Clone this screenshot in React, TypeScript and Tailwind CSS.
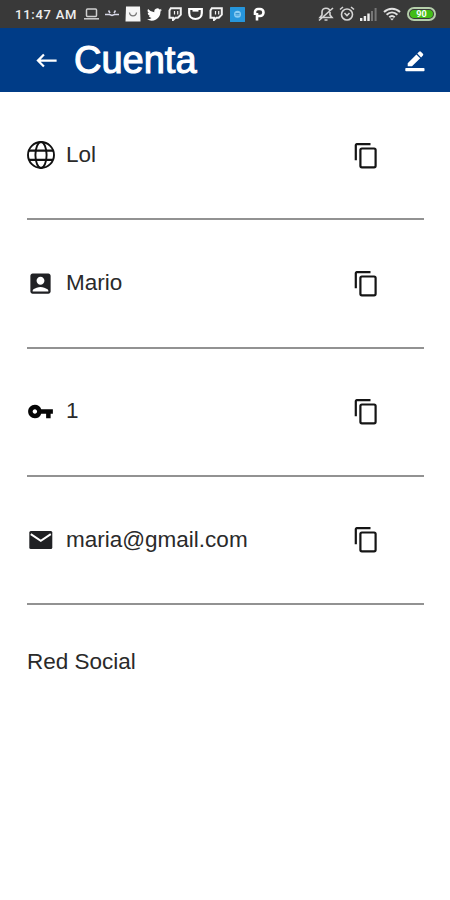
import React from 'react';
import { MdAccountBox, MdKeyboardBackspace, MdVpnKey } from 'react-icons/md';

function GlobeIcon() {
    return (
        <svg viewBox="0 0 28 28" className="w-7 h-7 shrink-0" fill="none" stroke="#111" strokeWidth="1.9">
            <circle cx="14" cy="14" r="13" />
            <ellipse cx="14" cy="14" rx="5.6" ry="13" />
            <path d="M2 9.700h24M2 18.900h24" strokeWidth="2.200" />
        </svg>
    );
}

function CopyIcon() {
    return (
        <svg viewBox="0 0 24 27" className="w-6 h-[27px]" fill="none" stroke="#151515" strokeWidth="2.200" strokeLinejoin="round">
            <path d="M1.800 18.300V3.200a1 1 0 0 1 1-1H16.500" />
            <rect x="6.400" y="6.500" width="15.200" height="18.800" rx="1.500" />
        </svg>
    );
}

function MailIcon() {
    return (
        <svg viewBox="0 0 24 18" className="w-6 h-[18px]">
            <rect x="0.300" width="23" height="18" rx="1.500" fill="#202124" />
            <path d="M1.800 3.200l10 6.600 10-6.600" fill="none" stroke="#fff" strokeWidth="2" />
        </svg>
    );
}

function EditIcon() {
    return (
        <svg viewBox="0 0 20 22" className="w-5 h-[22px]" fill="#fff">
            <path d="M2.700 13.200L11.400 4.500l3.800 3.800L7 16.300H2.700zM12.300 3.600l1.800-1.800a1.300 1.300 0 0 1 1.800 0l2 2a1.300 1.300 0 0 1 0 1.800l-1.800 1.800z" />
            <rect x="0.300" y="18" width="19.200" height="3.300" rx="0.800" />
        </svg>
    );
}

function TwitchIcon() {
    return (
        <svg viewBox="0 0 14 14" className="w-3.5 h-3.5" fill="none" stroke="#f2f2f2" strokeWidth="2">
            <path d="M2.800 1.200h10v6.500l-3 3H7.500L5 13v-2.300H1.500V3.500z" />
            <path d="M6.500 4v3.500M9.700 4v3.500" strokeWidth="1.200" />
        </svg>
    );
}

function StatusBar() {
    return (
        <div className="h-7 bg-[#393939] text-[#eeeeee] flex items-center">
            <span className="ml-[15px] w-[63px] font-[Roboto] font-medium text-[13px] tracking-[0.750px] leading-none whitespace-nowrap">11:47 AM</span>
            <div className="ml-[6px] flex items-center gap-1.5">
                <svg viewBox="0 0 15 12" className="w-[15px] h-3" fill="none" stroke="#d0d0d0" strokeWidth="1.500">
                    <rect x="2.500" y="1" width="10" height="7.500" rx="1" />
                    <path d="M0 10.800h15" />
                </svg>
                <svg viewBox="0 0 14 12" className="w-3.5 h-3" fill="none" stroke="#d8d8e8" strokeWidth="1.500">
                    <path d="M3.500 2.500L5 5M10.500 2.500L9 5M0 6.500h4.500l2.500 1 2.500-1H14" />
                </svg>
                <svg viewBox="0 0 16 16" className="w-4 h-4">
                    <path d="M1 0.500h14l.5 15H.5z" fill="#f6f6f6" />
                    <path d="M4.500 6.500c.5 4.500 6.500 4.500 7 0" fill="none" stroke="#777" strokeWidth="1.300" />
                </svg>
                <svg viewBox="0 0 24 24" className="w-[15px] h-[15px]" fill="#fff">
                    <path d="M24 4.600a10 10 0 0 1-2.800.8 5 5 0 0 0 2.100-2.700 10 10 0 0 1-3.100 1.200 4.900 4.900 0 0 0-8.400 4.500A14 14 0 0 1 1.700 3.200a4.900 4.900 0 0 0 1.500 6.500 5 5 0 0 1-2.200-.6 4.900 4.900 0 0 0 3.900 4.900 5 5 0 0 1-2.200.1 4.900 4.900 0 0 0 4.600 3.400A10 10 0 0 1 0 19.500 14 14 0 0 0 21.500 7.100 10 10 0 0 0 24 4.600z" />
                </svg>
                <TwitchIcon />
                <svg viewBox="0 0 15 14" className="w-[15px] h-3.5" fill="none" stroke="#fff" strokeWidth="2.200">
                    <path d="M1.200 2h12.600v4c0 3.500-2.500 6-6.300 6S1.200 9.500 1.200 6z" />
                    <path d="M4.500 3.500h6" />
                </svg>
                <TwitchIcon />
                <svg viewBox="0 0 15 15" className="w-[15px] h-[15px] ml-px">
                    <rect width="15" height="15" rx="0.500" fill="#2696dc" />
                    <circle cx="7.500" cy="7.200" r="3.500" fill="#8acdf3" />
                    <path d="M5.500 6.500h4M5.500 8h4" stroke="#3794d0" />
                </svg>
                <svg viewBox="0 0 12 14" className="w-3 h-3.5 ml-[2px]" fill="none" stroke="#fff" strokeWidth="2.600">
                    <path d="M4 13.500V6M2 8V5a3 3 0 0 1 3-3h2a3 3 0 0 1 0 7H4" />
                </svg>
            </div>
            <div className="ml-auto mr-[14px] flex items-center">
                <svg viewBox="0 0 16 16" className="w-4 h-4" fill="none" stroke="#d4d4d4" strokeWidth="1.600">
                    <path d="M2 11.500h12L12 9V6c0-5-8-5-8 0v3zM6.500 14h3M1 14.500L15 2" />
                </svg>
                <svg viewBox="0 0 16 16" className="w-4 h-4 ml-[5px]" fill="none" stroke="#d4d4d4" strokeWidth="1.600">
                    <circle cx="8" cy="8.500" r="5.500" />
                    <path d="M5.500 7L8 9.500 10.500 7M1 3.500L4 1M15 3.500L12 1" />
                </svg>
                <svg viewBox="0 0 17 13" className="w-[17px] h-[13px] ml-[5px]" fill="#eee">
                    <path d="M0 10h2.400v3H0zM3.700 8h2.400v5H3.700zM7.300 5.500h2.400V13H7.300z" />
                    <path d="M11 3h2v10h-2zM14.600 0h2v13h-2z" fill="#777" />
                </svg>
                <svg viewBox="0 0 18 14" className="w-[18px] h-3.5 ml-[6px]" fill="none" stroke="#e2e2e2" strokeWidth="2">
                    <path d="M1 5c4.600-4.400 11.400-4.400 16 0M3.600 7.800c3.200-3 7.600-3 10.800 0M6.300 10.300c1.600-1.500 3.800-1.500 5.400 0" />
                    <path d="M9 13.500l-2-2h4z" fill="#e2e2e2" stroke="none" />
                </svg>
                <div className="ml-[6px] w-[29px] h-[14px] rounded-full border-2 border-[#b5cfab] p-px">
                    <div className="h-full rounded-full bg-[#43bd18] flex items-center justify-center font-[Roboto] font-bold text-[9px] leading-none text-white">90</div>
                </div>
            </div>
        </div>
    );
}

const rows = [
    { text: 'Lol', icon: <GlobeIcon /> },
    { text: 'Mario', icon: <MdAccountBox size={27} color="#202124" /> },
    { text: '1', icon: <MdVpnKey size={27} color="#050505" /> },
    { text: 'maria@gmail.com', icon: <MailIcon /> },
];

export default function App() {
    return (
        <div className="w-[450px] h-[900px] bg-white overflow-hidden font-['Liberation_Sans',sans-serif] text-[#2a2a2a]">
            <StatusBar />
            <header className="h-16 bg-[#003c87] flex items-center text-white">
                <MdKeyboardBackspace size={27} className="ml-[33px]" />
                <h1 className="ml-[14px] pb-px text-[38px] leading-none [-webkit-text-stroke:1.100px_white]">Cuenta</h1>
                <div className="ml-auto mr-[25px] pt-0.5">
                    <EditIcon />
                </div>
            </header>
            <main className="pl-[27px] pr-[26px]">
                {rows.map((row) => (
                    <div key={row.text} className="h-[128.250px] border-b-2 border-[#929292] flex items-center">
                        <div className="w-[27px] flex justify-center">{row.icon}</div>
                        <span className="ml-3 text-[22.500px] leading-none">{row.text}</span>
                        <button className="ml-auto mr-[46px]">
                            <CopyIcon />
                        </button>
                    </div>
                ))}
                <p className="mt-[46px] text-[22.500px] leading-none">Red Social</p>
            </main>
        </div>
    );
}
